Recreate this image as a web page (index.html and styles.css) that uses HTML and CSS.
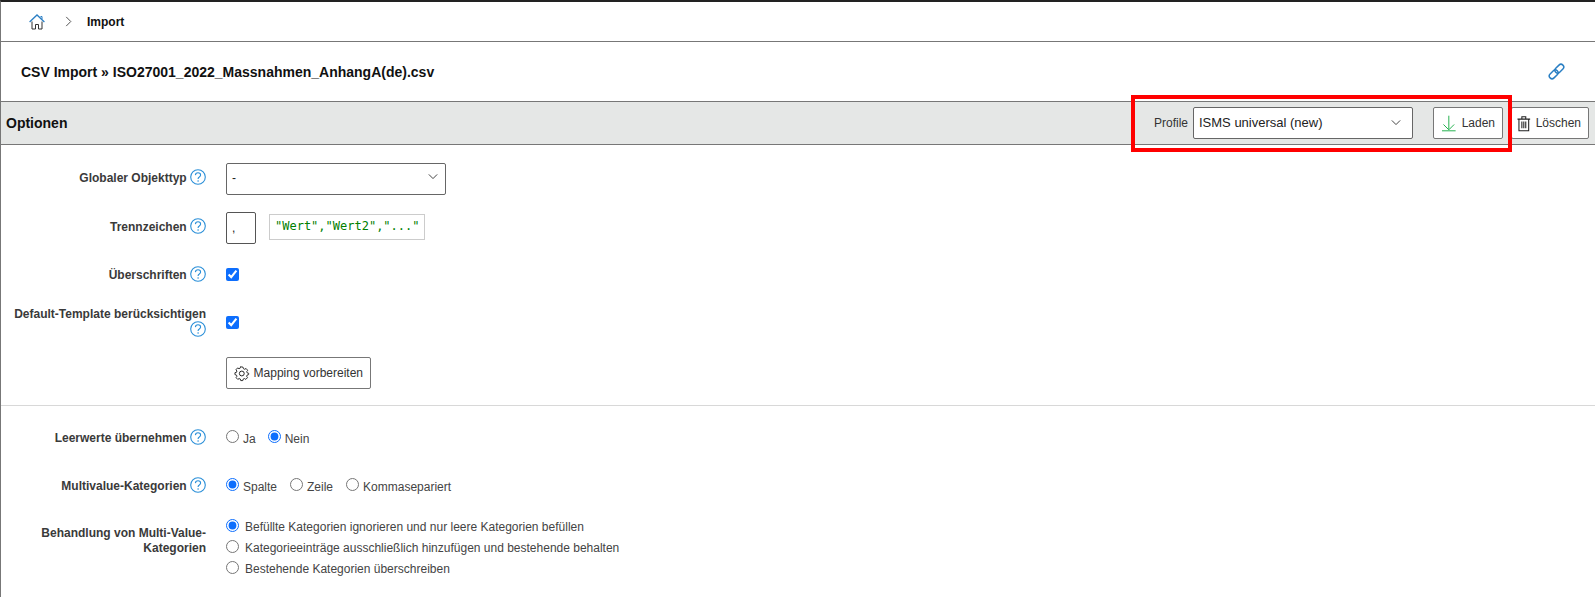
FILE: index.html
```html
<!DOCTYPE html>
<html lang="de">
<head>
<meta charset="utf-8">
<title>CSV Import</title>
<link rel="stylesheet" href="styles.css">
</head>
<body>
<svg class="defs" width="0" height="0" aria-hidden="true">
  <symbol id="help" viewBox="0 0 16 16">
    <circle cx="8" cy="8" r="7.300" fill="none" stroke="#2a8fd8" stroke-width="1.100"/>
    <path d="M5.400 6.100C5.500 4.600 6.600 3.800 8 3.800c1.500 0 2.600.9 2.600 2.200 0 1-.6 1.500-1.300 2-.8.5-1.200.9-1.200 1.800v.3" fill="none" stroke="#2a8fd8" stroke-width="1.100"/>
    <circle cx="8.100" cy="12" r=".8" fill="#2a8fd8"/>
  </symbol>
  <symbol id="chev" viewBox="0 0 12 8">
    <path d="M1 1.500l5 5 5-5" fill="none" stroke="#444" stroke-width="1.200"/>
  </symbol>
</svg>

<div class="page">
  <nav class="crumbs">
    <svg class="home" viewBox="0 0 16 16" width="16" height="16">
      <path d="M3 7.500V15h3.500v-4.500h3V15H13V7.500" fill="none" stroke="#333" stroke-width="1"/>
      <path d="M.6 8L8 1l7.400 7" fill="none" stroke="#2a7fc4" stroke-width="1.300"/>
      <path d="M11.500 2.500h1.500v2.500" fill="none" stroke="#2a7fc4" stroke-width="1"/>
    </svg>
    <svg class="crumb-sep" viewBox="0 0 7 12" width="7" height="11"><path d="M1 1l5 5-5 5" fill="none" stroke="#444" stroke-width="1"/></svg>
    <span class="crumb-current">Import</span>
  </nav>

  <header class="title-row">
    <h1 class="title">CSV Import » ISO27001_2022_Massnahmen_AnhangA(de).csv</h1>
    <svg class="link-icon" viewBox="0 0 16 16" width="17" height="17">
      <g fill="none" stroke="#2a7fc4" stroke-width="1.400" transform="rotate(-45 8 8)">
        <rect x="-.5" y="5.400" width="9.500" height="5.200" rx="2.600"/>
        <rect x="7" y="5.400" width="9.500" height="5.200" rx="2.600"/>
      </g>
    </svg>
  </header>

  <section class="options-bar">
    <h2 class="options-title">Optionen</h2>
    <div class="profile-tools">
      <span class="profile-label">Profile</span>
      <div class="select profile-select"><span>ISMS universal (new)</span><svg class="chev" width="10" height="7"><use href="#chev"/></svg></div>
      <button class="btn btn-load" type="button">
        <svg viewBox="0 0 14 16" width="14" height="17"><path d="M7 0v14M1.500 9L7 14.500 12.500 9M0 15.500h14" fill="none" stroke="#22b04c" stroke-width="1"/></svg>
        Laden
      </button>
      <button class="btn btn-delete" type="button">
        <svg viewBox="0 0 14 16" width="14" height="17"><path d="M.5 3.500h13M5 3.500V1h4v2.500M2 3.500V15.500h10V3.500M5 6v7M7 6v7M9 6v7" fill="none" stroke="#222" stroke-width="1.100"/></svg>
        Löschen
      </button>
    </div>
    <div class="highlight"></div>
  </section>

  <form class="form">
    <div class="row row-type">
      <label class="label label-up">Globaler Objekttyp <svg class="help" width="16" height="16"><use href="#help"/></svg></label>
      <div class="select type-select"><span>-</span><svg class="chev" width="10" height="7"><use href="#chev"/></svg></div>
    </div>
    <div class="row row-sep">
      <label class="label label-up">Trennzeichen <svg class="help" width="16" height="16"><use href="#help"/></svg></label>
      <div class="sep-box">,</div>
      <code class="sample">"Wert","Wert2","..."</code>
    </div>
    <div class="row row-head">
      <label class="label">Überschriften <svg class="help" width="16" height="16"><use href="#help"/></svg></label>
      <input class="check" type="checkbox" checked>
    </div>
    <div class="row row-tpl">
      <label class="label label-tight">Default-Template berücksichtigen <svg class="help" width="16" height="16"><use href="#help"/></svg></label>
      <input class="check" type="checkbox" checked>
    </div>
    <div class="row row-map">
      <span class="label"></span>
      <button class="btn btn-map" type="button">
        <svg viewBox="0 0 16 16" width="17" height="17"><path d="M8 1.300l1.300.1.500 1.700 1.200.6 1.600-.8 1.700 1.900-1 1.400.4 1.300 1.700.5-.1 1.400-1.700.6-.4 1.200.9 1.500-1.800 1.800-1.500-.9-1.200.5-.5 1.700H6.900l-.5-1.700-1.200-.5-1.500.9-1.800-1.800.9-1.500-.4-1.200-1.700-.6V7.400l1.700-.5.400-1.300-1-1.400 1.700-1.900 1.600.8 1.200-.6.500-1.700z" fill="none" stroke="#222" stroke-width="1" transform="translate(.3 .1) scale(.96)"/><circle cx="8" cy="8" r="2.500" fill="none" stroke="#222" stroke-width="1"/></svg>
        Mapping vorbereiten
      </button>
    </div>

    <hr class="divider">

    <div class="row row-empty">
      <label class="label label-up-small">Leerwerte übernehmen <svg class="help" width="16" height="16"><use href="#help"/></svg></label>
      <div class="radios">
        <label class="radio"><input type="radio" name="empty">Ja</label>
        <label class="radio"><input type="radio" name="empty" checked>Nein</label>
      </div>
    </div>
    <div class="row row-multi">
      <label class="label label-up-small">Multivalue-Kategorien <svg class="help" width="16" height="16"><use href="#help"/></svg></label>
      <div class="radios">
        <label class="radio"><input type="radio" name="multi" checked>Spalte</label>
        <label class="radio"><input type="radio" name="multi">Zeile</label>
        <label class="radio"><input type="radio" name="multi">Kommasepariert</label>
      </div>
    </div>
    <div class="row row-handling">
      <label class="label label-handling">Behandlung von Multi-Value-Kategorien</label>
      <div class="radio-stack">
        <label class="radio"><input type="radio" name="handling" checked>Befüllte Kategorien ignorieren und nur leere Kategorien befüllen</label>
        <label class="radio"><input type="radio" name="handling">Kategorieeinträge ausschließlich hinzufügen und bestehende behalten</label>
        <label class="radio"><input type="radio" name="handling">Bestehende Kategorien überschreiben</label>
      </div>
    </div>
  </form>
</div>
</body>
</html>
```
FILE: styles.css
```css
* { box-sizing: border-box; }
html, body { margin: 0; padding: 0; height: 100%; overflow: hidden; background: #fff; }
body { font-family: "Liberation Sans", Arial, sans-serif; font-size: 12px; color: #333; }
.defs { position: absolute; }

.page { height: 597px; border-top: 2px solid #222; border-left: 1px solid #777; }

.crumbs { height: 40px; display: flex; align-items: center; padding-left: 28px; border-bottom: 1px solid #777; }
.home { margin-right: 20px; }
.crumb-sep { margin-right: 15px; }
.crumb-current { font-size: 12px; font-weight: bold; color: #111; }

.title-row { height: 59px; display: flex; align-items: center; justify-content: space-between; padding: 0 30px 0 20px; }
.title { margin: 0; font-size: 14px; font-weight: bold; color: #111; }

.options-bar { position: relative; height: 44px; display: flex; align-items: center; justify-content: space-between; padding: 0 6px 0 5px; background: #e5e7e6; border-top: 1px solid #777; border-bottom: 1px solid #777; }
.options-title { margin: 0; font-size: 14px; font-weight: bold; color: #111; }
.profile-tools { display: flex; align-items: center; }
.profile-label { margin-right: 5px; color: #333; }
.highlight { position: absolute; left: 1130px; top: -7px; width: 381px; height: 57px; border: 4px solid #f00; pointer-events: none; }

.select { display: flex; align-items: center; justify-content: space-between; height: 32px; background: #fff; border: 1px solid #666; border-radius: 2px; padding: 0 5px; color: #222; }
.select span { line-height: 1; }
.chev { margin-right: 6px; }
.profile-select { width: 220px; font-size: 13px; margin-right: 20px; padding-bottom: 1px; }
.type-select { width: 220px; padding-bottom: 2px; }
.type-select .chev { margin-bottom: 4px; margin-right: 2px; }

.btn { display: inline-flex; align-items: center; height: 32px; padding: 0 7px; background: #fff; border: 1px solid #777; border-radius: 2px; font: 12px "Liberation Sans", Arial, sans-serif; color: #333; white-space: nowrap; }
.btn svg { margin-right: 4px; }
.btn-load { width: 70px; padding-left: 8px; margin-right: 8px; }
.btn-load svg { margin-right: 6px; }
.btn-delete { width: 78px; padding-left: 5px; }
.btn-delete svg { margin-right: 5px; }
.btn-map { width: 145px; }

.row { display: flex; align-items: center; }
.label { width: 205px; margin-right: 20px; text-align: right; font-weight: bold; color: #3a3a3a; flex: none; }
.label-up { padding-bottom: 4px; }
.label-up-small { padding-bottom: 2px; }
.label-tight { line-height: 14px; }
.help { vertical-align: -3px; }

.row-type { margin-top: 18px; height: 32px; }
.row-sep { margin-top: 17px; height: 32px; }
.row-head { margin-top: 20px; height: 20px; }
.row-tpl { margin-top: 22px; height: 32px; }
.row-map { margin-top: 19px; height: 32px; }

.sep-box { width: 30px; height: 32px; border: 1px solid #555; border-radius: 2px; padding: 8px 5px; font-size: 12px; color: #222; }
.sample { display: block; margin: 0 0 2px 13px; width: 156px; height: 26px; padding-left: 5px; border: 1px solid #ccc; font: 12px/23px "DejaVu Sans Mono", monospace; color: #008000; white-space: nowrap; }
.check { width: 13px; height: 13px; margin: 0; accent-color: #0d6efd; }

.divider { margin: 16px 0 0; border: 0; border-top: 1px solid #d8d8d8; }

.radios { display: flex; gap: 13px; margin-top: 2px; }
.row-empty .radios { gap: 12px; }
.radio { display: flex; align-items: center; color: #444; line-height: 14px; }
.radio input { width: 13px; height: 13px; margin: 0 4px 6px 0; accent-color: #0d6efd; flex: none; }
.row-empty { margin-top: 22px; height: 20px; }
.row-multi { margin-top: 28px; height: 20px; }
.row-handling { margin-top: 20px; align-items: flex-start; }
.label-handling { margin-top: 10px; line-height: 15px; }
.radio-stack { display: flex; flex-direction: column; }
.radio-stack .radio { height: 21px; }
.radio-stack .radio input { margin-right: 6px; margin-bottom: 3px; }
```
